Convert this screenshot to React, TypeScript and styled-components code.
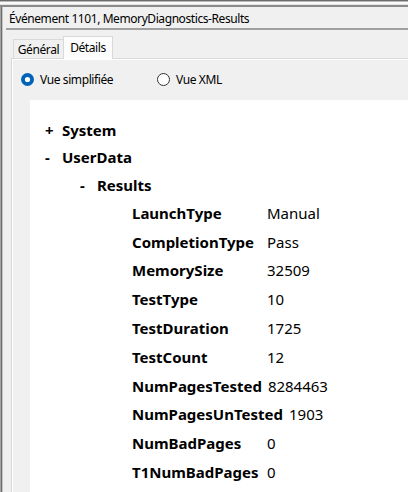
import React from 'react';
import styled, { createGlobalStyle } from 'styled-components';

const FONT = `"Noto Sans", "Open Sans", "DejaVu Sans", sans-serif`;

const Global = createGlobalStyle`
  html, body { margin: 0; padding: 0; width: 408px; height: 492px; overflow: hidden; background: #f0f0f0; }
  #root { width: 408px; height: 492px; }
  * { box-sizing: border-box; }
`;

const Window = styled.div`
  width: 408px;
  height: 492px;
  display: flex;
  flex-direction: column;
  background: #f0f0f0;
  font-family: ${FONT};
  color: #000;
  overflow: hidden;
`;

const TopEdge = styled.div`
  height: 7px;
  flex-shrink: 0;
  background: linear-gradient(
    to bottom,
    #6a6a6a 0, #6a6a6a 1px,
    #b8b8b8 1px, #b8b8b8 2px,
    #fafafa 2px, #fafafa 4px,
    #e2e2e2 4px, #e2e2e2 5px,
    #8a8a8a 5px, #8a8a8a 7px
  );
`;

const Body = styled.div`
  flex: 1;
  display: flex;
  min-height: 0;
`;

const LeftEdge = styled.div`
  width: 3px;
  flex-shrink: 0;
  background: linear-gradient(
    to right,
    #a4a4a4 0, #a4a4a4 1px,
    #6e6e6e 1px, #6e6e6e 2px,
    #c4c4c4 2px, #c4c4c4 3px
  );
`;

const Main = styled.div`
  flex: 1;
  display: flex;
  flex-direction: column;
  min-width: 0;
`;

const TitleBar = styled.div`
  height: 21px;
  flex-shrink: 0;
  display: flex;
  align-items: center;
  padding: 1px 0 0 6px;
  font-size: 12px;
  letter-spacing: -0.42px;
  white-space: nowrap;
`;

const Separator = styled.div`
  height: 2px;
  flex-shrink: 0;
  margin-left: 3px;
  background: #a0a0a0;
`;

const TabArea = styled.div`
  flex: 1;
  display: flex;
  flex-direction: column;
  padding-left: 8px;
  min-height: 0;
`;

const TabStrip = styled.div`
  height: 28px;
  flex-shrink: 0;
  display: flex;
  align-items: flex-end;
  padding-left: 2px;
  position: relative;
  z-index: 1;
`;

const Tab = styled.div<{ $active?: boolean }>`
  width: 50px;
  height: ${(p) => (p.$active ? '23px' : '19px')};
  margin-bottom: ${(p) => (p.$active ? '-1px' : '0')};
  display: flex;
  align-items: ${(p) => (p.$active ? 'flex-start' : 'center')};
  justify-content: center;
  padding-top: ${(p) => (p.$active ? '2px' : '0')};
  font-size: 12px;
  letter-spacing: -0.4px;
  background: ${(p) => (p.$active ? '#fcfcfc' : '#f0f0f0')};
  border-top: 1px solid #d9d9d9;
  border-left: 1px solid #d9d9d9;
  border-right: ${(p) => (p.$active ? '1px solid #d9d9d9' : 'none')};
`;

const Panel = styled.div`
  flex: 1;
  display: flex;
  flex-direction: column;
  border-top: 1px solid #d9d9d9;
  border-left: 1px solid #d9d9d9;
  box-shadow: inset 1px 1px 0 #ffffff;
  background: #f0f0f0;
  min-height: 0;
`;

const RadioRow = styled.div`
  height: 41px;
  flex-shrink: 0;
  display: flex;
  align-items: center;
  padding-left: 9px;
  font-size: 12px;
  letter-spacing: -0.4px;
`;

const RadioOption = styled.label<{ $width: number }>`
  width: ${(p) => p.$width}px;
  display: flex;
  align-items: center;
  gap: 6px;
  white-space: nowrap;
`;

const DocFrame = styled.div`
  flex: 1;
  display: flex;
  padding-left: 18px;
  min-height: 0;
`;

const Doc = styled.div`
  flex: 1;
  background: #ffffff;
  padding: 16px 0 0 15px;
  overflow: hidden;
  font-size: 15px;
`;

const NodeRow = styled.div`
  height: 27.5px;
  display: flex;
  align-items: center;
  font-weight: 700;
  white-space: nowrap;
`;

const Toggle = styled.span`
  width: 17px;
  flex-shrink: 0;
`;

const Children = styled.div<{ $indent: number }>`
  padding-left: ${(p) => p.$indent}px;
`;

const DataRow = styled.div`
  height: 28.8px;
  display: flex;
  align-items: center;
  white-space: nowrap;
`;

const Key = styled.span`
  min-width: 135px;
  padding-right: 6px;
  flex-shrink: 0;
  font-weight: 700;
`;

const Value = styled.span`
  font-weight: 400;
`;

const Radio = ({ checked }: { checked?: boolean }) => (
  <svg width="13" height="13" viewBox="0 0 13 13">
    {checked ? (
      <>
        <circle cx="6.5" cy="6.5" r="6.5" fill="#0063b8" />
        <circle cx="6.5" cy="6.5" r="2.6" fill="#ffffff" />
      </>
    ) : (
      <circle cx="6.5" cy="6.5" r="6" fill="#ffffff" stroke="#333333" strokeWidth="1" />
    )}
  </svg>
);

const rows: [string, string][] = [
  ['LaunchType', 'Manual'],
  ['CompletionType', 'Pass'],
  ['MemorySize', '32509'],
  ['TestType', '10'],
  ['TestDuration', '1725'],
  ['TestCount', '12'],
  ['NumPagesTested', '8284463'],
  ['NumPagesUnTested', '1903'],
  ['NumBadPages', '0'],
  ['T1NumBadPages', '0'],
];

export default function App() {
  return (
    <>
      <Global />
      <Window>
        <TopEdge />
        <Body>
          <LeftEdge />
          <Main>
            <TitleBar>Événement 1101, MemoryDiagnostics-Results</TitleBar>
            <Separator />
            <TabArea>
              <TabStrip>
                <Tab>Général</Tab>
                <Tab $active>Détails</Tab>
              </TabStrip>
              <Panel>
                <RadioRow>
                  <RadioOption $width={136}>
                    <Radio checked />
                    Vue simplifiée
                  </RadioOption>
                  <RadioOption $width={80}>
                    <Radio />
                    Vue XML
                  </RadioOption>
                </RadioRow>
                <DocFrame>
                  <Doc>
                    <NodeRow>
                      <Toggle>+</Toggle>System
                    </NodeRow>
                    <NodeRow>
                      <Toggle>-</Toggle>UserData
                    </NodeRow>
                    <Children $indent={35}>
                      <NodeRow>
                        <Toggle>-</Toggle>Results
                      </NodeRow>
                      <Children $indent={52}>
                        {rows.map(([k, v]) => (
                          <DataRow key={k}>
                            <Key>{k}</Key>
                            <Value>{v}</Value>
                          </DataRow>
                        ))}
                      </Children>
                    </Children>
                  </Doc>
                </DocFrame>
              </Panel>
            </TabArea>
          </Main>
        </Body>
      </Window>
    </>
  );
}
